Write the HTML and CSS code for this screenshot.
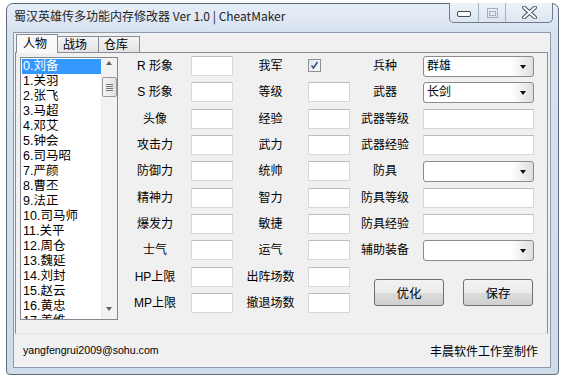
FILE: index.html
```html
<!DOCTYPE html>
<html lang="zh-CN">
<head>
    <meta charset="UTF-8">
    <title>蜀汉英雄传多功能内存修改器</title>
    <link rel="stylesheet" href="styles.css">
</head>
<body>
    <div class="window">
        <div class="titlebar">
            <span class="title">蜀汉英雄传多功能内存修改器 Ver 1.0 | CheatMaker</span>
            <div class="caption">
                <div class="cap-btn cap-min">
                    <svg width="14" height="6" viewBox="0 0 14 6"><rect x="0.5" y="0.5" width="13" height="5" rx="1.5" fill="#fff" stroke="#3f4a59"/></svg>
                </div>
                <div class="cap-btn cap-max">
                    <svg width="11" height="10" viewBox="0 0 11 10"><rect x="0.5" y="0.5" width="10" height="9" fill="none" stroke="#a3aebb"/><rect x="2.5" y="3.5" width="6" height="4" fill="none" stroke="#a3aebb"/></svg>
                </div>
                <div class="cap-btn cap-close">
                    <svg width="15" height="13" viewBox="0 0 15 13"><path d="M2 1.5 L7.5 6.5 L13 1.5 M2 11.5 L7.5 6.5 L13 11.5" fill="none" stroke="#4b5563" stroke-width="4" stroke-linecap="round"/><path d="M2 1.5 L7.5 6.5 L13 1.5 M2 11.5 L7.5 6.5 L13 11.5" fill="none" stroke="#fff" stroke-width="2" stroke-linecap="round"/></svg>
                </div>
            </div>
        </div>

        <div class="client">
            <div class="tabs">
                <div class="tab active">人物</div>
                <div class="tab">战场</div>
                <div class="tab">仓库</div>
            </div>

            <div class="panel">
                <div class="listbox">
                    <ul class="items">
                        <li class="selected">0.刘备</li>
                        <li>1.关羽</li>
                        <li>2.张飞</li>
                        <li>3.马超</li>
                        <li>4.邓艾</li>
                        <li>5.钟会</li>
                        <li>6.司马昭</li>
                        <li>7.严颜</li>
                        <li>8.曹丕</li>
                        <li>9.法正</li>
                        <li>10.司马师</li>
                        <li>11.关平</li>
                        <li>12.周仓</li>
                        <li>13.魏延</li>
                        <li>14.刘封</li>
                        <li>15.赵云</li>
                        <li>16.黄忠</li>
                        <li>17.姜维</li>
                    </ul>
                    <div class="scrollbar">
                        <span class="arrow up"></span>
                        <div class="thumb"><i></i><i></i><i></i><i></i></div>
                        <span class="arrow down"></span>
                    </div>
                </div>

                <div class="form">
                    <label class="lbl1">R 形象</label><input class="num" type="text">
                    <label class="lbl2">我军</label><span class="check"><svg width="9" height="9" viewBox="0 0 9 9"><path d="M1.5 4.5 L3.5 7 L7.5 1" fill="none" stroke="#3c4f8a" stroke-width="1.6"/></svg></span>
                    <label class="lbl3">兵种</label><div class="combo"><span>群雄</span><b></b></div>

                    <label class="lbl1">S 形象</label><input class="num" type="text">
                    <label class="lbl2">等级</label><input class="num" type="text">
                    <label class="lbl3">武器</label><div class="combo"><span>长剑</span><b></b></div>

                    <label class="lbl1">头像</label><input class="num" type="text">
                    <label class="lbl2">经验</label><input class="num" type="text">
                    <label class="lbl3">武器等级</label><input class="wide" type="text">

                    <label class="lbl1">攻击力</label><input class="num" type="text">
                    <label class="lbl2">武力</label><input class="num" type="text">
                    <label class="lbl3">武器经验</label><input class="wide" type="text">

                    <label class="lbl1">防御力</label><input class="num" type="text">
                    <label class="lbl2">统帅</label><input class="num" type="text">
                    <label class="lbl3">防具</label><div class="combo"><span></span><b></b></div>

                    <label class="lbl1">精神力</label><input class="num" type="text">
                    <label class="lbl2">智力</label><input class="num" type="text">
                    <label class="lbl3">防具等级</label><input class="wide" type="text">

                    <label class="lbl1">爆发力</label><input class="num" type="text">
                    <label class="lbl2">敏捷</label><input class="num" type="text">
                    <label class="lbl3">防具经验</label><input class="wide" type="text">

                    <label class="lbl1">士气</label><input class="num" type="text">
                    <label class="lbl2">运气</label><input class="num" type="text">
                    <label class="lbl3">辅助装备</label><div class="combo"><span></span><b></b></div>

                    <label class="lbl1">HP上限</label><input class="num" type="text">
                    <label class="lbl2">出阵场数</label><input class="num" type="text">
                    <div class="buttons">
                        <button>优化</button>
                        <button>保存</button>
                    </div>

                    <label class="lbl1">MP上限</label><input class="num" type="text">
                    <label class="lbl2">撤退场数</label><input class="num" type="text">
                </div>
            </div>

            <div class="footer">
                <span class="email">yangfengrui2009@sohu.com</span>
                <span class="studio">丰晨软件工作室制作</span>
            </div>
        </div>
    </div>
</body>
</html>
```

FILE: styles.css
```css
* { box-sizing: border-box; }
body { margin: 0; background: #fff; font-family: "Liberation Sans", "Noto Sans CJK SC", sans-serif; font-size: 12px; color: #000; }

.window { margin: 3px 0 0 6px; width: 553px; height: 372px; border: 1px solid #5f6b7a; border-radius: 7px 7px 4px 4px; background: linear-gradient(#e6eef8, #d7e2ef 28px, #cfdbe9); padding: 0 7px 6px 6px; display: flex; flex-direction: column; }
.titlebar { height: 28px; display: flex; align-items: flex-start; }
.title { margin: 4px 0 0 1px; line-height: 16px; font-family: "Noto Sans CJK SC", sans-serif; font-size: 12px; color: #1e1e1e; }
.caption { margin: -1px -2px 0 auto; height: 20px; display: flex; border: 1px solid #6f7c8d; border-top: none; border-radius: 0 0 5px 5px; background: linear-gradient(#eef3f9, #dde6f1); overflow: hidden; }
.cap-btn { display: flex; align-items: center; justify-content: center; height: 100%; border-right: 1px solid #a8b4c3; }
.cap-min { width: 29px; padding-top: 3px; }
.cap-max { width: 27px; }
.cap-close { width: 46px; border-right: none; }

.client { height: 336px; background: #f0f0f0; border: 1px solid #8e9bab; display: flex; flex-direction: column; }
.tabs { display: flex; align-items: flex-end; height: 19px; margin: 1px 0 0 2px; }
.tab { height: 17px; width: 42px; margin-left: -1px; border: 1px solid #898c95; border-bottom: none; background: linear-gradient(#f3f3f3, #e3e3e3); padding: 1px 0 0 5px; line-height: 14px; }
.tab.active { height: 19px; width: 42px; margin-left: 0; background: #f9f9f9; position: relative; z-index: 1; padding: 2px 0 0 6px; }
.panel { height: 282px; margin: -1px 2px 0 1px; border: 1px solid #898c95; border-bottom-color: #e4e4e4; background: #f0f0f0; padding: 3px 0 0 4px; display: flex; }

.listbox { width: 98px; height: 263px; margin-top: 1px; border: 1px solid #828790; background: #fff; display: flex; overflow: hidden; }
.items { list-style: none; margin: 0; padding: 1px 0 0 1px; width: 80px; }
.items li { height: 15px; line-height: 15px; padding-left: 1px; white-space: nowrap; font-size: 12.5px; }
.items li.selected { background: #3399ff; color: #fff; }
.scrollbar { width: 16px; background: #f2f2f2; border-left: 1px solid #ececec; position: relative; }
.arrow { position: absolute; left: 4px; width: 0; height: 0; border-left: 3.5px solid transparent; border-right: 3.5px solid transparent; }
.arrow.up { top: 3px; border-bottom: 4px solid #606060; }
.arrow.down { bottom: 8px; border-top: 4px solid #606060; }
.thumb { position: absolute; top: 19px; left: 0; width: 15px; height: 20px; border: 1px solid #9a9a9a; border-radius: 2px; background: linear-gradient(90deg, #f4f4f4, #e2e2e2); display: flex; flex-direction: column; align-items: center; justify-content: center; gap: 1px; }
.thumb i { display: block; width: 7px; height: 1px; background: #777; }

.form { margin-left: 6px; display: grid; grid-template-columns: 67px 42px 75px 41px 74px 111px; grid-auto-rows: 26.33px; align-items: start; }
.form label { height: 20px; line-height: 20px; text-align: center; white-space: nowrap; }
.lbl1 { padding-right: 5px; }
.lbl3 { padding-right: 2px; }
.form input { height: 20px; margin: 0; padding: 0 3px; border: 1px solid #d5d9df; border-top-color: #b9bcc2; background: #fff; font: inherit; }
.form input.num { width: 42px; }
.form input.wide { width: 111px; }
.check { width: 13px; height: 13px; margin-top: 3px; border: 1px solid #8e8f8f; background: linear-gradient(135deg, #dfe6f0, #f6f8fb); display: flex; align-items: center; justify-content: center; }
.combo { height: 21px; width: 111px; border: 1px solid #8b8b8b; border-radius: 3px; background: linear-gradient(90deg, #fff 80%, #f2f2f2 88%, #dedede); display: flex; align-items: center; justify-content: space-between; padding: 0 7px 0 3px; }
.combo span { line-height: 17px; }
.combo b { width: 0; height: 0; border-left: 3.5px solid transparent; border-right: 3.5px solid transparent; border-top: 4px solid #111; }

.buttons { grid-column: 5 / span 2; grid-row: span 2; display: flex; gap: 19px; padding: 12px 0 0 25px; }
.buttons button { width: 70px; height: 27px; border: 1px solid #707070; border-radius: 3px; background: linear-gradient(#f2f2f2, #ebebeb 50%, #dddddd 51%, #cfcfcf); font: inherit; font-size: 12.5px; padding: 0; }

.footer { flex: 1; display: flex; justify-content: space-between; align-items: center; padding: 0 12px 1px 9px; }
.email { font-size: 10.6px; }
.studio { font-size: 12px; }
```
